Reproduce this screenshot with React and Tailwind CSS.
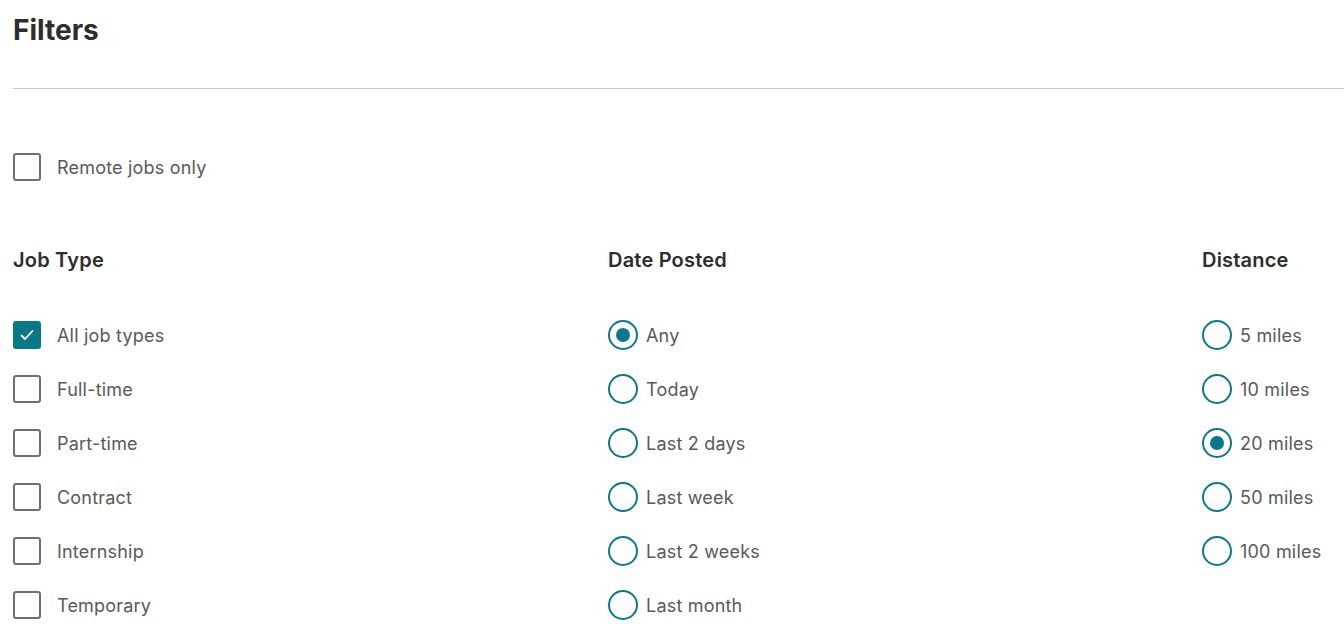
const JOB_TYPES = ["All job types", "Full-time", "Part-time", "Contract", "Internship", "Temporary"];
const DATES = ["Any", "Today", "Last 2 days", "Last week", "Last 2 weeks", "Last month"];
const DISTANCES = ["5 miles", "10 miles", "20 miles", "50 miles", "100 miles"];

function Checkbox({ checked, label }) {
  return (
    <label className="flex items-center h-[30px] gap-[16px]">
      {checked ? (
        <span className="w-[28px] h-[28px] rounded-[3px] bg-[#0b7889] flex items-center justify-center shrink-0">
          <svg width="16" height="16" viewBox="0 0 16 16" fill="none">
            <path d="M2.5 8.5l3.5 3.5 7.5-8" stroke="#fff" strokeWidth="1.8" strokeLinecap="round" strokeLinejoin="round" />
          </svg>
        </span>
      ) : (
        <span className="w-[28px] h-[28px] rounded-[3px] border-2 border-[#6f6f6f] bg-white shrink-0" />
      )}
      <span className="text-[18px] text-[#595959] tracking-[0.2px]">{label}</span>
    </label>
  );
}

function Radio({ checked, label }) {
  return (
    <label className="flex items-center h-[30px] gap-[8px]">
      <span className="w-[30px] h-[30px] rounded-full border-2 border-[#0b7889] flex items-center justify-center shrink-0">
        {checked && <span className="w-[14px] h-[14px] rounded-full bg-[#0b7889]" />}
      </span>
      <span className="text-[18px] text-[#595959] tracking-[0.2px]">{label}</span>
    </label>
  );
}

function Column({ title, children, className }) {
  return (
    <div className={className}>
      <h3 className="text-[20px] leading-[24px] font-semibold text-[#2d2d2d] tracking-[0.2px]">{title}</h3>
      <div className="mt-[48px] flex flex-col gap-[24px]">{children}</div>
    </div>
  );
}

export default function App() {
  return (
    <div className="min-h-screen bg-white pl-[13px] font-['Inter','Lato',sans-serif] overflow-hidden">
      <h1 className="pt-[14px] text-[28px] leading-[32px] font-bold text-[#2d2d2d]">Filters</h1>
      <div className="mt-[42px] border-b border-[#c9c9c9]" />

      <div className="mt-[63px]">
        <Checkbox label="Remote jobs only" />
      </div>

      <div className="mt-[66px] flex">
        <Column title="Job Type" className="w-[595px] shrink-0">
          {JOB_TYPES.map((t, i) => (
            <Checkbox key={t} label={t} checked={i === 0} />
          ))}
        </Column>
        <Column title="Date Posted" className="w-[594px] shrink-0">
          {DATES.map((t, i) => (
            <Radio key={t} label={t} checked={i === 0} />
          ))}
        </Column>
        <Column title="Distance" className="shrink-0">
          {DISTANCES.map((t, i) => (
            <Radio key={t} label={t} checked={i === 2} />
          ))}
        </Column>
      </div>
    </div>
  );
}
